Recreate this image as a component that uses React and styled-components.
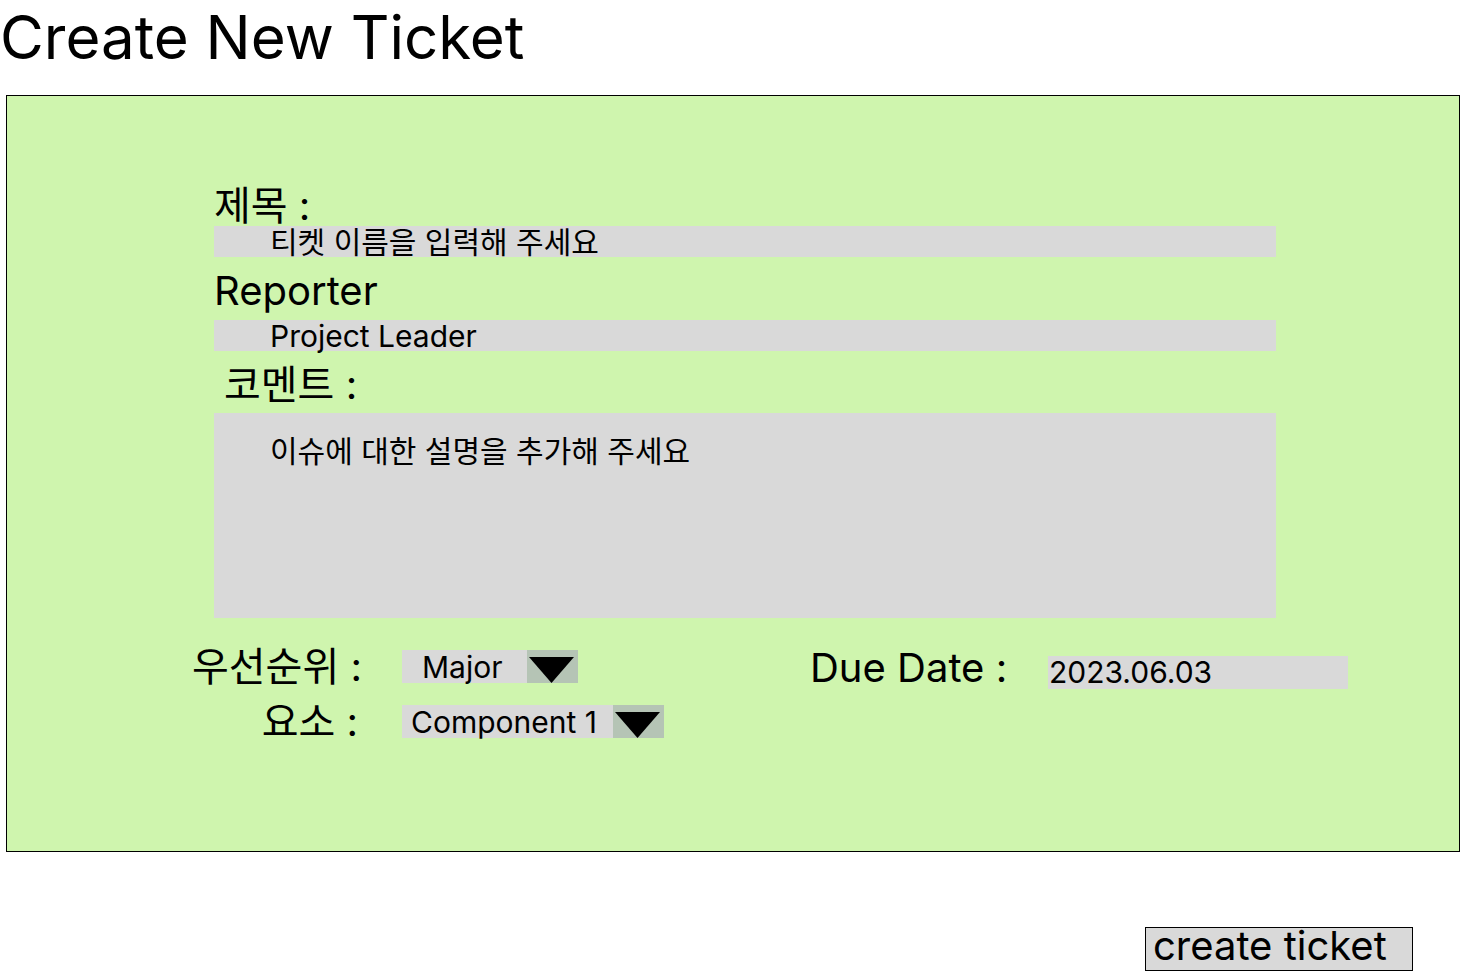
import styled, { createGlobalStyle } from "styled-components";

const GlobalStyle = createGlobalStyle`
  body {
    margin: 0;
    background: #fff;
    font-family: Inter, "Noto Sans CJK KR", sans-serif;
    color: #000;
  }
`;

function Arrow() {
  return (
    <svg width="45" height="26" viewBox="0 0 45 26">
      <polygon points="0,0 45,0 22.5,26" fill="#000" />
    </svg>
  );
}

function Select({ value, textWidth, pad }) {
  return (
    <SelectBox>
      <SelectText $width={textWidth} $pad={pad}>
        {value}
      </SelectText>
      <ArrowBox>
        <Arrow />
      </ArrowBox>
    </SelectBox>
  );
}

export default function App() {
  return (
    <Page>
      <GlobalStyle />
      <Title>Create New Ticket</Title>
      <Panel>
        <Form>
          <Label>제목 :</Label>
          <Input>티켓 이름을 입력해 주세요</Input>
          <Label $mt={10} $lh={48}>
            Reporter
          </Label>
          <Input $mt={5}>Project Leader</Input>
          <Label $mt={14} $ml={10}>
            코멘트 :
          </Label>
          <TextArea>이슈에 대한 설명을 추가해 주세요</TextArea>
        </Form>
        <BottomRow>
          <SelectGrid>
            <RowLabel>우선순위 :</RowLabel>
            <Select value="Major" textWidth={125} pad={20} />
            <RowLabel>요소 :</RowLabel>
            <Select value="Component 1" textWidth={211} pad={9} />
          </SelectGrid>
          <DueGroup>
            <Label>Due Date :</Label>
            <DateInput>2023.06.03</DateInput>
          </DueGroup>
        </BottomRow>
      </Panel>
      <Footer>
        <Button>create ticket</Button>
      </Footer>
    </Page>
  );
}

const Page = styled.div`
  width: 1460px;
  height: 972px;
  overflow: hidden;
`;

const Title = styled.h1`
  margin: 0;
  height: 95px;
  box-sizing: border-box;
  padding: 7px 0 0 0;
  font-size: 60px;
  line-height: 60px;
  font-weight: 400;
  white-space: nowrap;
`;

const Panel = styled.div`
  margin-left: 6px;
  width: 1454px;
  height: 757px;
  box-sizing: border-box;
  border: 1px solid #000;
  background: #cff5ae;
`;

const Form = styled.div`
  display: flex;
  flex-direction: column;
  align-items: flex-start;
  padding: 90px 0 0 207px;
`;

const Label = styled.div`
  font-size: 40px;
  line-height: ${(p) => p.$lh || 40}px;
  margin-top: ${(p) => p.$mt || 0}px;
  margin-left: ${(p) => p.$ml || 0}px;
  white-space: nowrap;
`;

const Input = styled.div`
  width: 1062px;
  height: 31px;
  box-sizing: border-box;
  padding-left: 56px;
  margin-top: ${(p) => p.$mt || 0}px;
  background: #d9d9d9;
  font-size: 30px;
  line-height: 32px;
  white-space: nowrap;
`;

const TextArea = styled.div`
  width: 1062px;
  height: 205px;
  box-sizing: border-box;
  margin-top: 8px;
  padding: 20px 0 0 56px;
  background: #d9d9d9;
  font-size: 30px;
  line-height: 36px;
`;

const BottomRow = styled.div`
  display: flex;
  align-items: flex-start;
  margin-top: 32px;
  padding-left: 185px;
`;

const SelectGrid = styled.div`
  display: grid;
  grid-template-columns: 166px auto;
  column-gap: 44px;
  row-gap: 22px;
  align-items: start;
`;

const RowLabel = styled.div`
  text-align: right;
  font-size: 40px;
  line-height: 33px;
  white-space: nowrap;
`;

const SelectBox = styled.div`
  display: flex;
  height: 33px;
  width: max-content;
`;

const SelectText = styled.div`
  width: ${(p) => p.$width}px;
  box-sizing: border-box;
  padding-left: ${(p) => p.$pad}px;
  background: #d9d9d9;
  font-size: 30px;
  line-height: 35px;
  white-space: nowrap;
`;

const ArrowBox = styled.div`
  width: 51px;
  display: flex;
  align-items: flex-start;
  padding: 7px 0 0 2px;
  box-sizing: border-box;
  background: #b5c4b5;
`;

const DueGroup = styled.div`
  display: flex;
  align-items: flex-start;
  margin-left: 146px;
  margin-top: -2px;

  & > ${Label} {
    width: 238px;
  }
`;

const DateInput = styled.div`
  width: 300px;
  height: 33px;
  margin-top: 8px;
  padding-left: 1px;
  box-sizing: border-box;
  background: #d9d9d9;
  font-size: 30px;
  line-height: 32px;
`;

const Footer = styled.div`
  display: flex;
  justify-content: flex-end;
  padding: 75px 47px 0 0;
`;

const Button = styled.button`
  display: flex;
  align-items: flex-start;
  width: 268px;
  height: 44px;
  box-sizing: border-box;
  border: 1px solid #000;
  border-radius: 0;
  background: #d9d9d9;
  padding: 3px 0 0 7px;
  font-family: Inter, sans-serif;
  font-size: 40px;
  line-height: 30px;
  color: #000;
`;
